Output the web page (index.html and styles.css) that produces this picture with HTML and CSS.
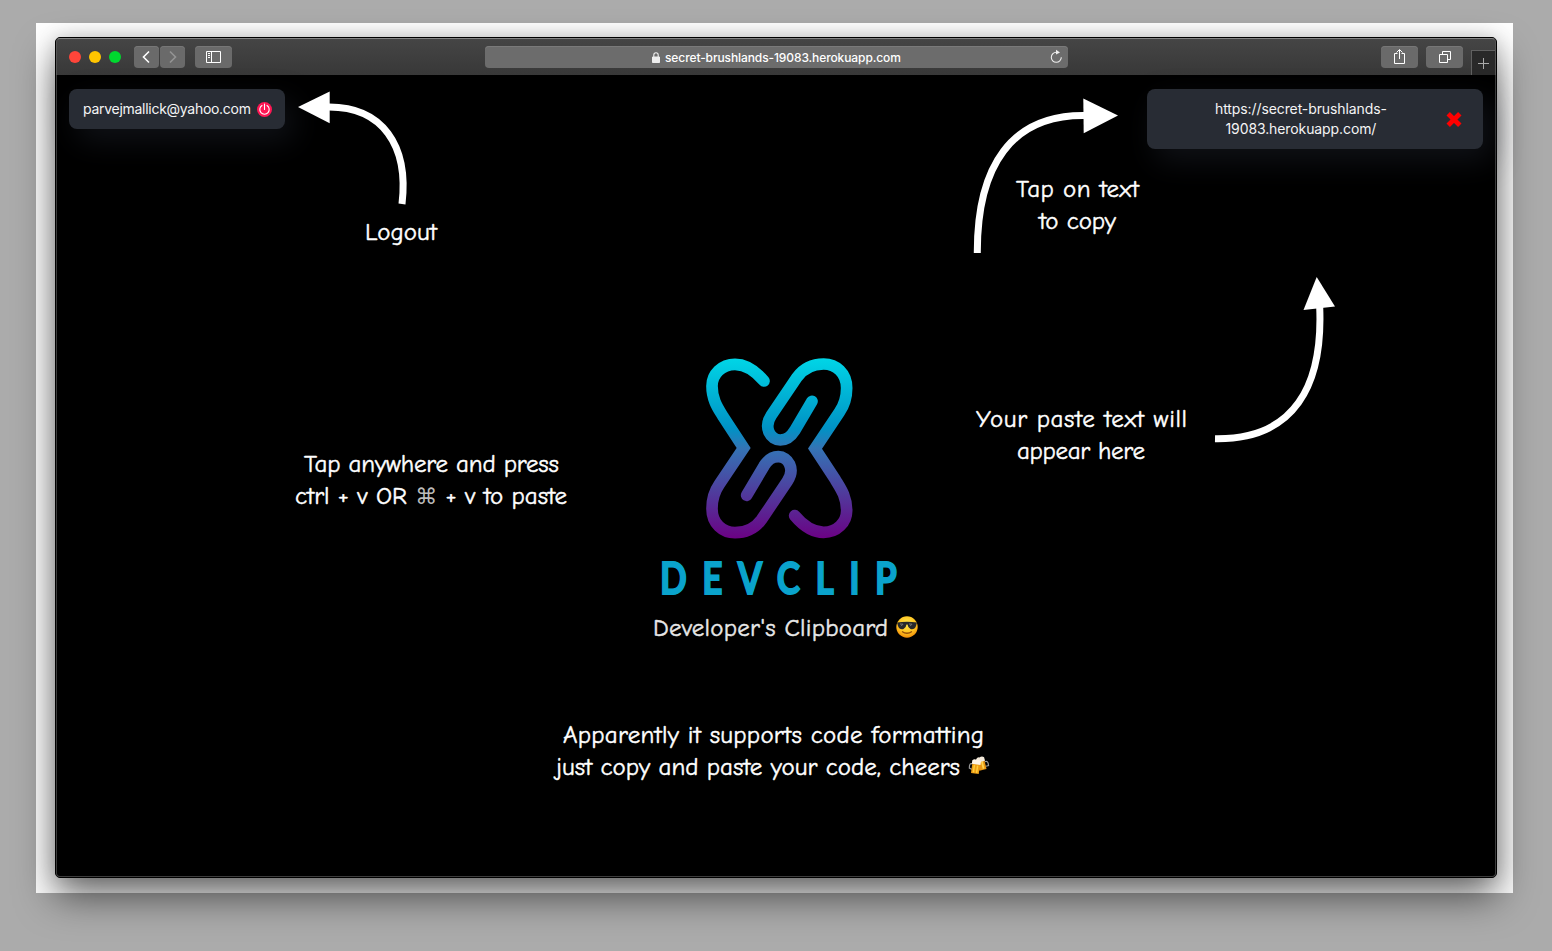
FILE: index.html
```html
<!DOCTYPE html>
<html lang="en">
<head>
<meta charset="utf-8">
<title>DevClip</title>
<link rel="stylesheet" href="styles.css">
</head>
<body>
<main class="stage">
  <section class="window">
    <header class="toolbar">
      <div class="toolbar-left">
        <div class="lights"><i class="light red"></i><i class="light yellow"></i><i class="light green"></i></div>
        <div class="nav">
          <span class="btn small"><svg width="25" height="22" viewBox="0 0 25 22"><path d="M15 5.500 9.500 11l5.500 5.500" fill="none" stroke="#fff" stroke-width="1.600"/></svg></span>
          <span class="btn small"><svg width="25" height="22" viewBox="0 0 25 22"><path d="M10 5.500 15.500 11 10 16.500" fill="none" stroke="#949494" stroke-width="1.600"/></svg></span>
        </div>
        <span class="btn"><svg width="37" height="22" viewBox="0 0 37 22"><path d="M11.500 5.500h14v11h-14zM16.500 5.500v11M13 7.500h2M13 9.500h2M13 11.500h2" fill="none" stroke="#fff"/></svg></span>
      </div>
      <div class="address">
        <span class="address-text"><svg width="8" height="11" viewBox="0 0 8 11"><path d="M.5 5h7v5.500h-7z" fill="#eee" stroke="#eee"/><path d="M1.800 5V3a2.200 2.200 0 0 1 4.400 0v2" fill="none" stroke="#eee" stroke-width="1.100"/></svg><b>secret-brushlands-19083.herokuapp.com</b></span>
        <svg class="reload" width="14" height="16" viewBox="0 0 14 16"><path d="M7.500 3.300a5 5 0 1 0 4.800 5" fill="none" stroke="#eee" stroke-width="1.100"/><path d="M7 .8 11 3.400 7 5.600z" fill="#eee"/></svg>
      </div>
      <div class="toolbar-right">
        <span class="btn"><svg width="37" height="22" viewBox="0 0 37 22"><path d="M16.500 7.500h-3v10h10v-10h-3M18.500 13V4M15.500 6.500l3-3 3 3" fill="none" stroke="#fff"/></svg></span>
        <span class="btn"><svg width="37" height="22" viewBox="0 0 37 22"><path d="M13.500 8.500h8v8h-8zM16.500 8V5.500h8v8H22" fill="none" stroke="#fff"/></svg></span>
        <span class="newtab"><svg width="24" height="24" viewBox="0 0 24 24"><path d="M6 12.500h11M11.500 7v11" stroke="#aaa"/></svg></span>
      </div>
    </header>
    <div class="page">
      <div class="card account"><span class="email">parvejmallick@yahoo.com</span>
        <svg width="15" height="15" viewBox="0 0 15 15"><circle cx="7.500" cy="7.500" r="7.500" fill="#ff1654"/><path d="M5 3.500a4.700 4.700 0 1 0 5 0M7.500 2v5.500" fill="none" stroke="#fff" stroke-width="1.100" stroke-linecap="round"/></svg>
      </div>
      <div class="card clip"><p class="clip-text">https://secret-brushlands-<br>19083.herokuapp.com/</p>
        <svg width="16" height="16" viewBox="0 0 16 16"><path d="M2.200 2.700l11.600 11.600M13.800 2.700 2.200 14.300" stroke="#f00" stroke-width="4.800"/></svg>
      </div>
      <svg class="guide" viewBox="57 75 1438 801">
        <defs>
          <linearGradient id="ink" gradientUnits="userSpaceOnUse" x1="0" y1="40" x2="0" y2="578">
            <stop offset="0" stop-color="#00d5e6"/><stop offset=".39" stop-color="#0092c5"/><stop offset=".5" stop-color="#3474b5"/><stop offset="1" stop-color="#6b0284"/>
          </linearGradient>
          <radialGradient id="face" cx=".5" cy=".35" r=".65"><stop offset="0" stop-color="#ffe94d"/><stop offset=".65" stop-color="#ffc21f"/><stop offset="1" stop-color="#f08c0a"/></radialGradient>
        </defs>
        <g class="arrow">
          <path d="M329 107C382 107 409 145 402 204"/><path class="head" d="M298 107 329.700 91.500V123.300z"/>
          <path d="M977.300 253C977 165 1012 115 1084 115.500"/><path class="head" d="M1118 115.500 1083.300 98.500 1083.700 133.300z"/>
          <path d="M1215 438.700C1295 440 1323 385 1319.700 307"/><path class="head" d="M1316.700 277 1335 306.500 1303.500 310z"/>
        </g>
        <g transform="translate(690 345.300) scale(.33333)" fill="none" stroke="url(#ink)" stroke-width="35" stroke-linecap="round">
          <path d="M222 107C195 75 165 57 135 57C95 57 66 87 66 122C66 165 85 190 100 215L161 308L88 417C72 440 66 460 66 490C66 535 98 562 135 562C165 562 195 550 215 522L292 408C317 370 294 334 265 334C245 334 234 343 222 362L170 450"/>
          <path d="M314 511C341 543 371 561 401 561C441 561 470 531 470 496C470 453 451 428 436 403L375 310L448 201C464 178 470 158 470 128C470 83 438 56 401 56C371 56 341 68 321 96L244 210C219 248 242 284 271 284C291 284 302 275 314 256L366 168"/>
        </g>
        <text class="brand" transform="translate(660 593.500) scale(.8 1)" textLength="296">DEVCLIP</text>
        <g class="note">
          <text x="365" y="239.500" textLength="72">Logout</text>
          <text x="1016" y="196.500" textLength="123">Tap on text</text>
          <text x="1039" y="228.500" textLength="77">to copy</text>
          <text x="976" y="427" textLength="211">Your paste text will</text>
          <text x="1017" y="459" textLength="128">appear here</text>
          <text x="304" y="472" textLength="255">Tap anywhere and press</text>
          <text x="295" y="504" textLength="272">ctrl + v OR <tspan class="command">⌘</tspan> + v to paste</text>
          <text class="tagline" x="653" y="636" textLength="235">Developer's Clipboard</text>
          <text x="563" y="742.500" textLength="421">Apparently it supports code formatting</text>
          <text x="556" y="774.500" textLength="404">just copy and paste your code, cheers</text>
        </g>
        <g transform="translate(896 616)">
          <circle cx="11" cy="11" r="10.700" fill="url(#face)"/>
          <path d="M1 6.500Q11 5 21 6.500L20 10Q18.500 14 14.500 13Q12 12 11.500 8.500H10.500Q10 12 7.500 13Q3.500 14 2 10z" fill="#26282b"/>
          <path d="M4 8l3 .2-2 2M13 8l3 .2-2 2" fill="none" stroke="#777"/><path d="M6 15.500Q11 19 16 15.500" fill="none" stroke="#96500a" stroke-width="1.400"/>
        </g>
        <g transform="translate(968.500 756) scale(.92)">
          <g transform="rotate(-14 15 8)"><path d="M18 7q4-1 3 5h-3" fill="none" stroke="#999" stroke-width="1.300"/><path d="M10 4h8v11h-8z" fill="#e99512"/><path d="M15 6v8" stroke="#ffd34d" stroke-width="2"/><path d="M9.500 6V2q2-2 4-1 3-1 5 1v4z" fill="#f4eadb"/></g>
          <g transform="rotate(8 7 13)"><path d="M3.500 9Q0 8 1 14l3 1" fill="none" stroke="#999" stroke-width="1.300"/><path d="M3.500 7h8.500v12H3.500z" fill="#ef9e15"/><path d="M6 10v8M9.500 10v8" stroke="#ffcf3c" stroke-width="1.600"/><path d="M3 9V5q2-2 4.500-1 3-1 5 1v4z" fill="#fff5e8"/></g>
        </g>
      </svg>
    </div>
  </section>
</main>
</body>
</html>
```
FILE: styles.css
```css
* { box-sizing: border-box; }
body { margin: 0; height: 951px; padding: 23px 39px 58px 36px; background: #ababab; overflow: hidden; font-family: Inter, "Liberation Sans", sans-serif; }
svg { display: block; flex: none; }
.stage { height: 870px; padding: 14px 16px 15px 19px; background: #fff; }
.window { height: 841px; display: flex; flex-direction: column; background: #000; border: 1px solid #000; border-radius: 5px; box-shadow: 0 18px 38px rgba(0,0,0,.58), 0 0 18px rgba(0,0,0,.15); }
.toolbar { height: 37px; flex: none; display: flex; justify-content: space-between; align-items: center; padding-left: 12px; border: 1px solid #555; border-top-color: #858585; border-bottom: 0; border-radius: 4px 4px 0 0; background: linear-gradient(#454545, #383838); }
.toolbar-left { width: 416px; display: flex; align-items: center; }
.lights { display: flex; gap: 8px; width: 65px; }
.light { width: 12px; height: 12px; border-radius: 50%; }
.red { background: #ff453a; }
.yellow { background: #ffc500; }
.green { background: #00d92f; }
.nav { display: flex; gap: 1px; margin-right: 10px; }
.btn { width: 37px; height: 22px; border-radius: 4px; background: #6a6a6a; box-shadow: inset 0 1px #777; }
.small { width: 25px; }
.address { width: 583px; height: 22px; border-radius: 4px; background: #6c6c6c; box-shadow: inset 0 1px #7a7a7a; display: flex; align-items: center; padding: 0 5px 0 167px; justify-content: space-between; }
.address-text { display: flex; align-items: center; gap: 5px; color: #fff; font-size: 12px; letter-spacing: -.1px; white-space: nowrap; }
.address-text b { font-weight: 500; }
.toolbar-right { width: 427px; height: 100%; display: flex; justify-content: flex-end; align-items: center; gap: 8px; }
.newtab { width: 24px; height: 25px; align-self: flex-end; border: 1px solid #606060; border-width: 1px 0 0 1px; background: #292929; }
.page { flex: 1; position: relative; display: flex; justify-content: space-between; align-items: flex-start; padding: 14px 12px 0 12px; border: 1px solid #3c3c3c; border-top: 0; border-radius: 0 0 4px 4px; }
.card { display: flex; align-items: center; justify-content: space-between; border-radius: 8px; background: #282c34; color: #f4f4f4; font-size: 14px; line-height: 20px; box-shadow: 8px 12px 30px rgba(40,44,58,.4); }
.account { width: 216px; height: 40px; padding: 0 13px 0 14px; }
.clip { width: 336px; height: 60px; padding: 0 21px 0 68px; }
.clip-text { margin: 0; text-align: center; letter-spacing: -.1px; }
.email, .clip-text { white-space: nowrap; }
.email { letter-spacing: -.28px; }
.guide { position: absolute; left: 0; top: 0; width: 1438px; height: 801px; }
.arrow { fill: none; stroke: #fff; stroke-width: 7; }
.head { fill: #fff; stroke: none; }
.note { fill: #fff; stroke: #fff; stroke-width: .45px; font: 25px "Comic Sans MS", "Comic Neue", "Open Sans", sans-serif; font-variant-ligatures: none; font-feature-settings: "liga" 0, "clig" 0, "calt" 0, "dlig" 0; }
.tagline { fill: #e8e8e8; stroke: #e8e8e8; }
.command { font-family: "DejaVu Sans", sans-serif; font-size: 22px; fill: #bbb; stroke: none; }
.brand { fill: #0aa3cc; stroke: #0aa3cc; stroke-width: 1.8; font: 700 44px Lato, sans-serif; }
```
